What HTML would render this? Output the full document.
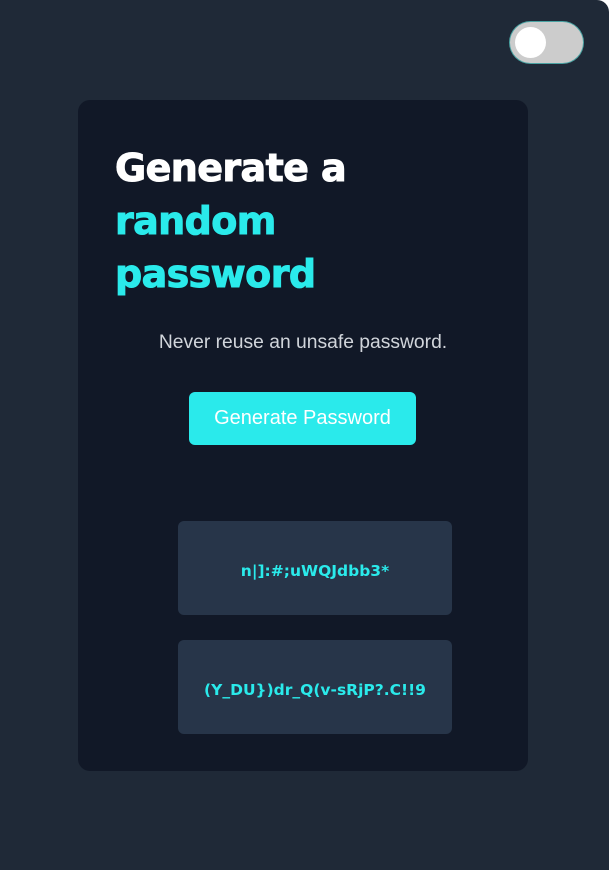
<!DOCTYPE html>
<html><head><style>
html,body{margin:0;padding:0;background:#fff;width:611px;height:870px;overflow:hidden}
.page{position:absolute;left:0;top:0;width:609px;height:870px;background:#1f2937;border-top-right-radius:12px;font-family:"Liberation Sans","DejaVu Sans",sans-serif}
.tog{position:absolute;left:510px;top:22px;width:73px;height:41px;border-radius:21px;background:#ccc;box-shadow:0 0 0 1px #4aa3a3}
.tog:after{content:"";position:absolute;left:5px;top:5px;width:31px;height:31px;border-radius:50%;background:#fff}
.card{position:absolute;left:78px;top:100px;width:450px;height:671px;background:#111827;border-radius:12px}
h1{position:absolute;left:37px;top:42px;margin:0;font:bold 38px/53px "DejaVu Sans",sans-serif;color:#fff;letter-spacing:-0.6px;-webkit-text-stroke:1px currentColor}
h1 span{color:#2aeaeb}
.sub{position:absolute;left:0;width:450px;top:232px;text-align:center;color:#d1d5db;font-size:19.3px}
.btn{position:absolute;left:111px;top:292px;width:227px;height:53px;background:#2aeaeb;border-radius:6px;color:#fff;font-size:20px;text-align:center;line-height:53px}
.pw{position:absolute;left:100px;width:274px;height:94px;background:#273549;border-radius:6px;color:#2aeaeb;font:bold 15.5px/100px "DejaVu Sans",sans-serif;text-align:center}
</style></head><body>
<div class="page">
<div class="tog"></div>
<div class="card">
<h1>Generate a<br><span>random<br>password</span></h1>
<div class="sub">Never reuse an unsafe password.</div>
<div class="btn">Generate Password</div>
<div class="pw" style="top:421px">n|]:#;uWQJdbb3*</div>
<div class="pw" style="top:540px">(Y_DU})dr_Q(v-sRjP?.C!!9</div>
</div>
</div>
</body></html>
